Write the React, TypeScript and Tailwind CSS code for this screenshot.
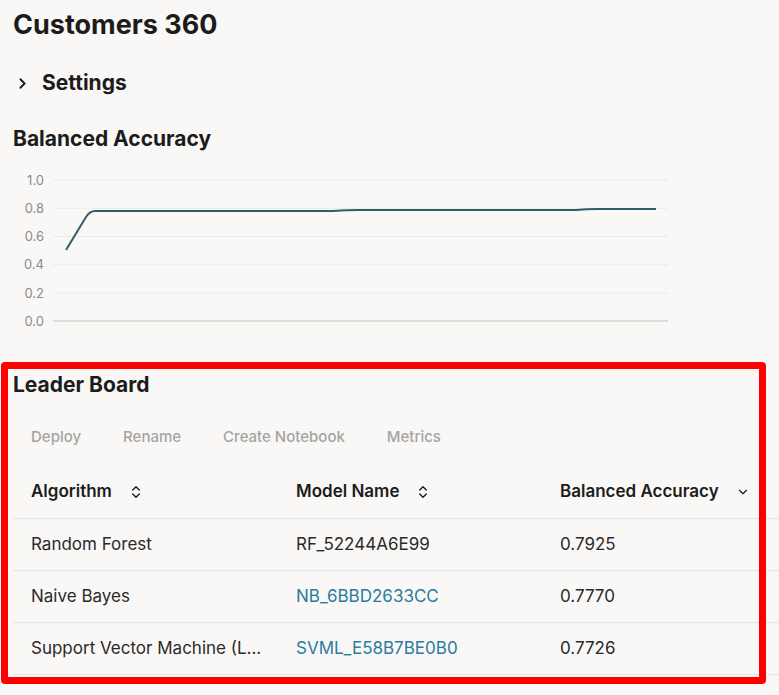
import React from "react";
import { ChevronRight, ChevronsUpDown, ChevronDown } from "lucide-react";

const rows = [
  { algo: "Random Forest", model: "RF_52244A6E99", link: false, acc: "0.7925" },
  { algo: "Naive Bayes", model: "NB_6BBD2633CC", link: true, acc: "0.7770" },
  { algo: "Support Vector Machine (L...", model: "SVML_E58B7BE0B0", link: true, acc: "0.7726" },
];

const gridY = [18, 46.3, 74.5, 102.8, 131, 159];
const labels = ["1.0", "0.8", "0.6", "0.4", "0.2", "0.0"];

function Chart() {
  return (
    <svg width="680" height="200" className="block -ml-[13px]">
      {gridY.map((y, i) => (
        <g key={i}>
          <line
            x1="53"
            x2="668"
            y1={y}
            y2={y}
            stroke={i === 5 ? "#d6d4d1" : "#eceae8"}
            strokeWidth={i === 5 ? 1.5 : 1}
          />
          <text
            x="44"
            y={y + 4.5}
            textAnchor="end"
            fontSize="13"
            fill="#8c8b89"
            fontFamily="Inter, sans-serif"
          >
            {labels[i]}
          </text>
        </g>
      ))}
      <path
        d="M66,88 L86,55 Q90,49 95,49 L333,49 Q345,48 360,48 L576,48 Q586,47 597,47 L656,47"
        fill="none"
        stroke="#2f5e64"
        strokeWidth="2"
        strokeLinejoin="round"
      />
    </svg>
  );
}

export default function App() {
  return (
    <div
      className="relative min-h-[695px] overflow-hidden bg-[#f9f8f6] pl-[13px] text-[#1c1c1c]"
      style={{ fontFamily: "Inter, 'Noto Sans', sans-serif" }}
    >
      <div className="flex h-[50px] items-center text-[27px] font-bold">Customers 360</div>
      <div className="flex h-[66px] items-center gap-[11px]">
        <ChevronRight size={17} strokeWidth={2.6} className="ml-[1px]" />
        <span className="text-[21px] font-bold">Settings</span>
      </div>
      <div className="flex h-[46px] items-center text-[21px] font-bold">Balanced Accuracy</div>
      <Chart />
      <div className="flex h-[46px] items-center text-[21px] font-bold">Leader Board</div>
      <div className="flex h-[58px] items-center gap-[42px] pl-[18px] text-[15px] font-medium text-[#a5a4a2]">
        <span>Deploy</span>
        <span>Rename</span>
        <span>Create Notebook</span>
        <span>Metrics</span>
      </div>
      <div className="text-[17px]">
        <div className="flex h-[53px] items-center border-b border-[#e6e4e1] font-semibold">
          <div className="flex w-[265px] items-center gap-[16px] pl-[18px]">
            <span>Algorithm</span>
            <ChevronsUpDown size={16} strokeWidth={2} />
          </div>
          <div className="flex w-[264px] items-center gap-[16px] pl-[18px]">
            <span>Model Name</span>
            <ChevronsUpDown size={16} strokeWidth={2} />
          </div>
          <div className="flex items-center gap-[17px] pl-[18px]">
            <span>Balanced Accuracy</span>
            <ChevronDown size={14} strokeWidth={2} />
          </div>
        </div>
        {rows.map((r) => (
          <div key={r.model} className="flex h-[52px] items-center border-b border-[#e6e4e1] text-[#2a2a2a]">
            <div className="w-[265px] pl-[18px]">{r.algo}</div>
            <div className={`w-[264px] pl-[18px] ${r.link ? "text-[#2a7c9e]" : ""}`}>{r.model}</div>
            <div className="pl-[18px]">{r.acc}</div>
          </div>
        ))}
      </div>
      <div className="pointer-events-none absolute left-[1px] top-[362px] h-[322px] w-[765px] rounded-[4px] border-[7px] border-[#ff0000]" />
    </div>
  );
}
